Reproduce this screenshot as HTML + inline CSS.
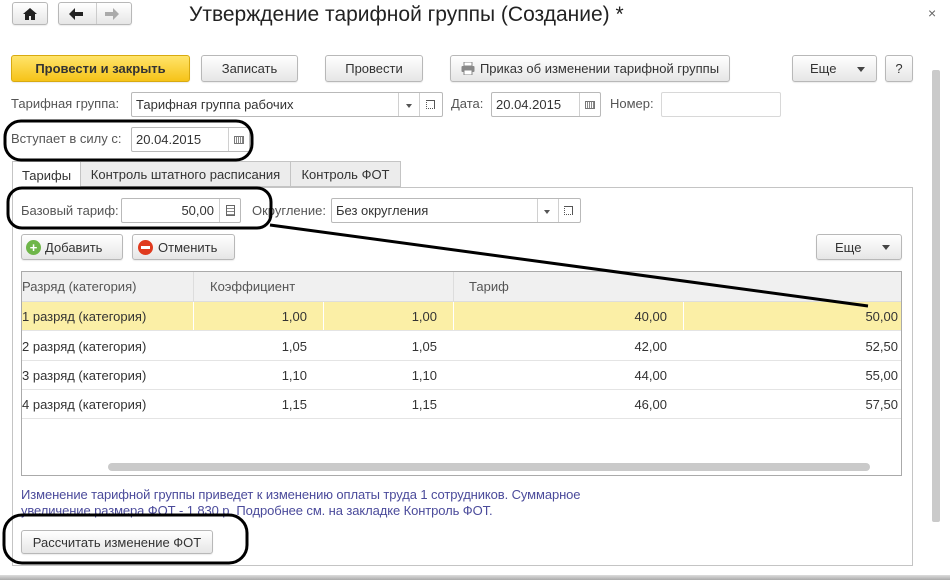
<!DOCTYPE html>
<html><head><meta charset="utf-8"><style>
*{box-sizing:border-box;margin:0;padding:0}
body{width:950px;height:580px;background:#fff;position:relative;overflow:hidden;font-family:"Liberation Sans",Arial,sans-serif;font-size:13px;color:#333}
.a{position:absolute}
.btn{position:absolute;border:1px solid #b8b8b8;border-radius:3px;background:linear-gradient(#fff,#e6e6e6);display:flex;align-items:center;justify-content:center;color:#333;font-size:13px;box-shadow:0 1px 1px rgba(0,0,0,.08)}
.inp{position:absolute;border:1px solid #b9b9b9;border-radius:2px;background:#fff;display:flex;align-items:center;padding-left:4px;color:#333}
.lbl{position:absolute;color:#555;font-size:13px}
.sep{position:absolute;top:0;bottom:0;border-left:1px solid #d0d0d0}
.row{position:absolute;left:21px;width:880px;height:29px;border-bottom:1px solid #e4e4e4}
.c{position:absolute;top:0;height:100%;display:flex;align-items:center}
.r{justify-content:flex-end}
.cal{width:10px;height:8px;border:1px solid #777;background:repeating-linear-gradient(90deg,#fff 0 1px,#888 1px 2px)}
</style></head><body>
<!-- nav -->
<div class="btn" style="left:12px;top:2px;width:36px;height:23px"><svg width="14" height="12" viewBox="0 0 14 12"><path d="M7 0L0 6h2v6h4V8h2v4h4V6h2z" fill="#222"/></svg></div>
<div class="btn" style="left:58px;top:2px;width:74px;height:23px;justify-content:flex-start">
<svg style="position:absolute;left:10px;top:5px" width="14" height="12" viewBox="0 0 14 12"><path d="M0 6L6 0v4h8v4H6v4z" fill="#222"/></svg>
<div style="position:absolute;left:37px;top:0;bottom:0;border-left:1px solid #ccc"></div>
<svg style="position:absolute;left:46px;top:5px" width="14" height="12" viewBox="0 0 14 12"><path d="M14 6L8 0v4H0v4h8v4z" fill="#aaa"/></svg></div>
<div class="a" style="left:189px;top:3px;font-size:21px;color:#222">Утверждение тарифной группы (Создание) *</div>
<div class="a" style="left:928px;top:5px;font-size:14px;color:#666">×</div>
<!-- toolbar -->
<div class="btn" style="left:11px;top:55px;width:179px;height:27px;background:linear-gradient(#ffe46a,#f6c318);border-color:#d8aa10;font-weight:bold;color:#333">Провести и закрыть</div>
<div class="btn" style="left:201px;top:55px;width:97px;height:27px">Записать</div>
<div class="btn" style="left:325px;top:55px;width:98px;height:27px">Провести</div>
<div class="btn" style="left:450px;top:55px;width:280px;height:27px"><svg width="14" height="13" viewBox="0 0 14 13" style="margin-right:5px"><rect x="3" y="0" width="8" height="4" fill="#fff" stroke="#888"/><rect x="0.5" y="4" width="13" height="6" rx="1" fill="#888"/><rect x="3" y="8" width="8" height="5" fill="#fff" stroke="#888"/></svg>Приказ об изменении тарифной группы</div>
<div class="btn" style="left:792px;top:55px;width:85px;height:27px;justify-content:flex-start;padding-left:17px">Еще<span style="position:absolute;right:11px;top:11px;border:4px solid transparent;border-top:5px solid #444"></span></div>
<div class="btn" style="left:885px;top:55px;width:28px;height:27px">?</div>
<!-- fields -->
<div class="lbl" style="left:11px;top:96px">Тарифная группа:</div>
<div class="inp" style="left:131px;top:92px;width:312px;height:25px">Тарифная группа рабочих
<div class="sep" style="left:266px"></div><span class="a" style="left:274px;top:11px;border:3px solid transparent;border-top:4px solid #555"></span>
<div class="sep" style="left:287px"></div><span class="a" style="left:294px;top:7px;width:9px;height:9px;border:1px solid #555;border-left-style:dotted;border-bottom-style:dotted"></span></div>
<div class="lbl" style="left:451px;top:96px">Дата:</div>
<div class="inp" style="left:491px;top:92px;width:110px;height:25px">20.04.2015<div class="sep" style="left:87px"></div><div class="cal a" style="left:93px;top:8px"></div></div>
<div class="lbl" style="left:610px;top:96px">Номер:</div>
<div class="inp" style="left:661px;top:92px;width:120px;height:25px;border-color:#d8d8d8"></div>
<div class="lbl" style="left:11px;top:131px">Вступает в силу с:</div>
<div class="inp" style="left:131px;top:127px;width:119px;height:25px">20.04.2015<div class="sep" style="left:96px"></div><div class="cal a" style="left:102px;top:8px"></div></div>
<!-- tabs -->
<div class="a" style="left:12px;top:187px;width:901px;height:379px;border:1px solid #c4c4c4"></div>
<div class="a" style="left:12px;top:161px;width:69px;height:27px;border:1px solid #c4c4c4;border-bottom:none;background:#fff;display:flex;align-items:center;justify-content:center;color:#333">Тарифы</div>
<div class="a" style="left:80px;top:161px;width:211px;height:26px;border:1px solid #c4c4c4;background:#ececec;display:flex;align-items:center;justify-content:center;color:#333">Контроль штатного расписания</div>
<div class="a" style="left:290px;top:161px;width:111px;height:26px;border:1px solid #c4c4c4;background:#ececec;display:flex;align-items:center;justify-content:center;color:#333">Контроль ФОТ</div>
<div class="lbl" style="left:21px;top:203px">Базовый тариф:</div>
<div class="inp" style="left:121px;top:198px;width:120px;height:25px;justify-content:flex-end;padding-right:26px">50,00<div class="sep" style="left:97px"></div><div class="a" style="left:104px;top:6px;width:9px;height:11px;border:1px solid #666;background:repeating-linear-gradient(#fff 0 2px,#888 2px 3px)"></div></div>
<div class="lbl" style="left:252px;top:203px">Округление:</div>
<div class="inp" style="left:331px;top:198px;width:250px;height:25px">Без округления
<div class="sep" style="left:205px"></div><span class="a" style="left:212px;top:11px;border:3px solid transparent;border-top:4px solid #555"></span>
<div class="sep" style="left:226px"></div><span class="a" style="left:232px;top:7px;width:9px;height:9px;border:1px solid #555;border-left-style:dotted;border-bottom-style:dotted"></span></div>
<div class="btn" style="left:21px;top:234px;width:102px;height:26px;justify-content:flex-start;padding-left:4px"><span style="width:15px;height:15px;border-radius:50%;background:#6fb64a;color:#fff;font-weight:bold;font-size:13px;line-height:15px;text-align:center;margin-right:4px">+</span>Добавить</div>
<div class="btn" style="left:132px;top:234px;width:103px;height:26px;justify-content:flex-start;padding-left:5px"><span style="width:15px;height:15px;border-radius:50%;background:#e03a1e;display:flex;align-items:center;justify-content:center;margin-right:5px"><span style="width:9px;height:3px;background:#fff"></span></span>Отменить</div>
<div class="btn" style="left:816px;top:234px;width:86px;height:26px;justify-content:flex-start;padding-left:18px">Еще<span style="position:absolute;right:11px;top:10px;border:4px solid transparent;border-top:5px solid #444"></span></div>
<!-- table -->
<div class="a" style="left:21px;top:271px;width:881px;height:205px;border:1px solid #aaa"></div>
<div class="a" style="left:22px;top:272px;width:879px;height:30px;background:#f0f0f0;border-bottom:1px solid #ddd"></div>
<div class="a" style="left:193px;top:272px;height:30px;border-left:1px solid #ddd"></div>
<div class="a" style="left:453px;top:272px;height:30px;border-left:1px solid #ddd"></div>
<div class="a" style="left:22px;top:279px;color:#555">Разряд (категория)</div>
<div class="a" style="left:210px;top:279px;color:#555">Коэффициент</div>
<div class="a" style="left:469px;top:279px;color:#555">Тариф</div>
<div class="row" style="top:302px;background:#fbefa6;left:22px;width:879px">
<div class="c" style="left:0">1 разряд (категория)</div>
<div class="c r" style="left:171px;width:130px;padding-right:16px;border-left:1px solid #fff">1,00</div>
<div class="c r" style="left:301px;width:130px;padding-right:16px;border-left:1px solid #fff">1,00</div>
<div class="c r" style="left:431px;width:230px;padding-right:16px;border-left:1px solid #fff">40,00</div>
<div class="c r" style="left:661px;width:218px;padding-right:3px;border-left:1px solid #fff">50,00</div></div>
<div class="row" style="top:332px;left:22px;width:879px"><div class="c" style="left:0">2 разряд (категория)</div><div class="c r" style="left:171px;width:130px;padding-right:16px">1,05</div><div class="c r" style="left:301px;width:130px;padding-right:16px">1,05</div><div class="c r" style="left:431px;width:230px;padding-right:16px">42,00</div><div class="c r" style="left:661px;width:218px;padding-right:3px">52,50</div></div>
<div class="row" style="top:361px;left:22px;width:879px"><div class="c" style="left:0">3 разряд (категория)</div><div class="c r" style="left:171px;width:130px;padding-right:16px">1,10</div><div class="c r" style="left:301px;width:130px;padding-right:16px">1,10</div><div class="c r" style="left:431px;width:230px;padding-right:16px">44,00</div><div class="c r" style="left:661px;width:218px;padding-right:3px">55,00</div></div>
<div class="row" style="top:390px;left:22px;width:879px"><div class="c" style="left:0">4 разряд (категория)</div><div class="c r" style="left:171px;width:130px;padding-right:16px">1,15</div><div class="c r" style="left:301px;width:130px;padding-right:16px">1,15</div><div class="c r" style="left:431px;width:230px;padding-right:16px">46,00</div><div class="c r" style="left:661px;width:218px;padding-right:3px">57,50</div></div>
<div class="a" style="left:108px;top:463px;width:762px;height:8px;border-radius:4px;background:#cacaca"></div>
<!-- info -->
<div class="a" style="left:21px;top:487px;color:#4b4b9b;font-size:13px;line-height:16px;letter-spacing:-0.1px">Изменение тарифной группы приведет к изменению оплаты труда 1 сотрудников. Суммарное<br>увеличение размера ФОТ - 1 830 р. Подробнее см. на закладке Контроль ФОТ.</div>
<div class="btn" style="left:21px;top:530px;width:192px;height:24px">Рассчитать изменение ФОТ</div>
<!-- scrollbar -->
<div class="a" style="left:932px;top:70px;width:8px;height:452px;background:#cacaca;border-radius:2px"></div>
<div class="a" style="left:0;top:575px;width:950px;height:5px;background:linear-gradient(#ddd,#aaa)"></div>
<!-- annotations -->
<svg class="a" style="left:0;top:0" width="950" height="580">
<g fill="none" stroke="#000" stroke-width="3">
<rect x="5" y="121" width="247" height="39" rx="16"/>
<rect x="8" y="188" width="263" height="40" rx="14"/>
<path d="M270 225L868 306"/>
<rect x="4" y="515" width="243" height="48" rx="18"/>
</g></svg>
</body></html>
